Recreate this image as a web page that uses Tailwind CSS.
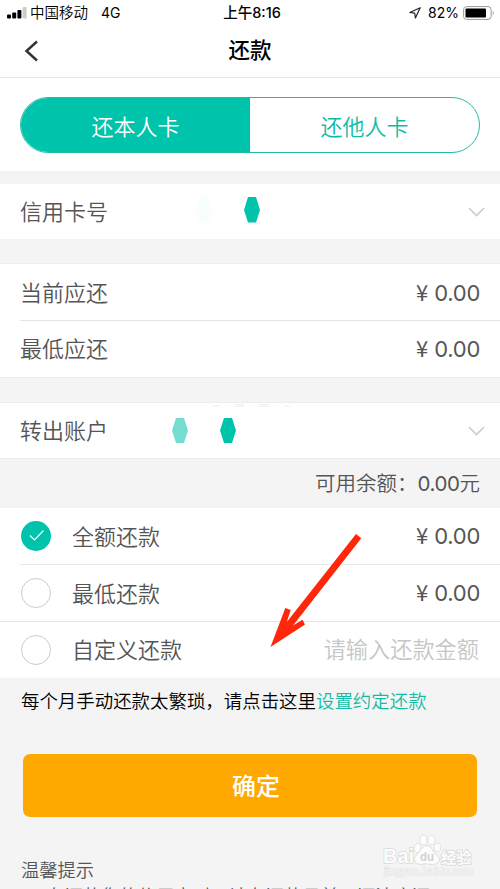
<!DOCTYPE html>
<html lang="zh-CN">
<head>
<meta charset="utf-8">
<meta name="viewport" content="width=device-width, initial-scale=1">
<title>还款</title>
<script src="https://cdn.jsdelivr.net/npm/@tailwindcss/browser@4"></script>
</head>
<body class="relative h-[889px] w-[500px] overflow-hidden bg-[#f4f4f4] font-['Inter','Noto_Sans_CJK_SC',sans-serif] text-[22px] leading-none text-[#555]">
<header class="h-[78px] border-b border-[#e8e8e8] bg-white text-black">
  <div class="grid h-[26px] grid-cols-[1fr_auto_1fr] items-center pl-[7px] pr-[5px] text-[14.5px]">
    <div class="flex items-center">
      <svg class="h-[12px] w-[20px]" viewBox="0 0 20 12"><rect x="0" y="7.5" width="4" height="4" rx="1"/><rect x="5.2" y="5.5" width="4" height="6" rx="1"/><rect x="10.4" y="3" width="4" height="8.500" rx="1"/><rect x="15.600" y="0" width="4" height="11.500" rx="1" fill="#ccc"/></svg>
      <span class="ml-[3px] font-[350]">中国移动</span><span class="ml-[13px] text-[14px]">4G</span>
    </div>
    <div class="pl-[2px] font-medium">上午8:16</div>
    <div class="flex items-center justify-end">
      <svg class="mr-[7px] h-[12px] w-[12px]" viewBox="0 0 12 12" fill="none" stroke="#222" stroke-width="1.200" stroke-linejoin="round"><path d="M11.200.8.800 5.500 5.700 6.200 6.400 11Z"/></svg>
      <span class="text-[14px]">82%</span>
      <svg class="ml-[4px] h-[14px] w-[32px]" viewBox="0 0 32 14"><rect x=".6" y=".6" width="27.500" height="12.800" rx="3" fill="white" stroke="#999"/><rect x="2.500" y="2.500" width="20.500" height="9" rx="1"/><path d="M29.700 4.700q2 2.300 0 4.600z" fill="#999"/></svg>
    </div>
  </div>
  <div class="grid h-[50px] grid-cols-[1fr_auto_1fr] items-center px-6">
    <svg class="h-[22px] w-[15px]" viewBox="0 0 15 22" fill="none" stroke="#333" stroke-width="2.500"><path d="M13 1.500 2.500 11 13 20.500"/></svg>
    <h1 class="text-[21.5px] font-medium">还款</h1>
  </div>
</header>
<main class="font-[350]">
  <section class="h-[93px] bg-white px-5 pt-[19px]">
    <div class="grid h-[56px] grid-cols-2 overflow-hidden rounded-[28px] border border-[#22bda9] text-center leading-[58px]">
      <button class="bg-[#00c3ab] text-white">还本人卡</button>
      <button class="text-[#12bba5]">还他人卡</button>
    </div>
  </section>
  <section class="mt-[13px] flex h-[55px] items-center bg-white px-5">
    <span class="w-[176px]">信用卡号</span>
    <svg class="mb-[4px] h-[26px] w-[66px]" viewBox="0 0 66 26"><path d="M4 0h8l4 13-4 13H4L0 13Z" fill="#f8fdfe"/><path d="M52 0h8l4 13-4 12.500h-8L48 13Z" fill="#00c3ab"/></svg>
    <svg class="-mr-[5px] ml-auto h-[10px] w-[17px]" viewBox="0 0 17 10" fill="none" stroke="#ccc" stroke-width="1.600"><path d="m1 1 7.500 7.500L16 1"/></svg>
  </section>
  <section class="mt-[24px] border-y border-[#ececec] bg-white pl-5">
    <div class="flex h-[57px] items-center justify-between border-b border-[#e5e5e5] pr-5 pt-px"><span>当前应还</span><span class="flex gap-[6px] font-normal"><span class="-mt-[2px] font-['Noto_Sans_CJK_SC']">¥</span><span class="tracking-[-0.3px]">0.00</span></span></div>
    <div class="flex h-[56px] items-center justify-between pr-5"><span>最低应还</span><span class="flex gap-[6px] font-normal"><span class="-mt-[2px] font-['Noto_Sans_CJK_SC']">¥</span><span class="tracking-[-0.3px]">0.00</span></span></div>
  </section>
  <section class="relative mt-[24px] flex h-[57px] items-center border-y border-[#ececec] bg-white px-5">
    <span class="w-[152px]">转出账户</span>
    <svg class="h-[25px] w-[66px]" viewBox="0 0 66 25"><path d="M4 0h8l4 12.500L12 25H4L0 12.500Z" fill="#75ddd0"/><path d="M52 0h8l4 12.500L60 25h-8l-4-12.500Z" fill="#00c3ab"/></svg>
    <svg class="-mr-[5px] ml-auto h-[10px] w-[17px]" viewBox="0 0 17 10" fill="none" stroke="#ccc" stroke-width="1.600"><path d="m1 1 7.500 7.500L16 1"/></svg>
    <svg class="absolute left-[210px] top-0 h-[5px] w-[84px]" viewBox="0 0 84 5" fill="#f3f3f3"><path d="M1 4q4-3 9-2l-1 2zM25 1h9v3h-9zM49 1h10v3H49zM73 1l9 3h-7z"/></svg>
  </section>
  <div class="flex h-[49px] items-center justify-end px-5 pt-[2px] text-[20.5px]">可用余额：<span class="font-normal tracking-[-0.400px]">0.00</span>元</div>
  <section class="bg-white pl-5">
    <div class="flex h-[57px] items-center border-b border-[#e9e9e9] pr-5">
      <svg class="ml-px h-[30px] w-[30px]" viewBox="0 0 30 30" fill="none"><circle cx="15" cy="15" r="15" fill="#00c3ab"/><path d="m9 14.500 4.500 4.500L22.500 9.500" stroke="white" stroke-width="1.200"/></svg>
      <span class="ml-[21px] pt-px">全额还款</span><span class="ml-auto flex gap-[6px] font-normal"><span class="-mt-[2px] font-['Noto_Sans_CJK_SC']">¥</span><span class="tracking-[-0.3px]">0.00</span></span>
    </div>
    <div class="-ml-5 flex h-[57px] items-center border-b border-[#e5e5e5] px-5">
      <span class="ml-px h-[30px] w-[30px] rounded-full border border-[#ccc]"></span>
      <span class="ml-[21px] pt-px">最低还款</span><span class="ml-auto flex gap-[6px] font-normal"><span class="-mt-[2px] font-['Noto_Sans_CJK_SC']">¥</span><span class="tracking-[-0.3px]">0.00</span></span>
    </div>
    <div class="flex h-[56px] items-center pr-5">
      <span class="ml-px h-[30px] w-[30px] rounded-full border border-[#ccc]"></span>
      <span class="ml-[21px]">自定义还款</span><span class="ml-auto mr-px text-[22.2px] text-[#c6c6c6]">请输入还款金额</span>
    </div>
  </section>
  <p class="flex h-[46px] items-center whitespace-nowrap pl-[21px] text-[18.450px] text-black">每个月手动还款太繁琐，请点击这里<a class="text-[#12bba5]">设置约定还款</a></p>
  <button class="ml-[23px] mt-[30px] block h-[63px] w-[454px] rounded-[7px] bg-[#ffa800] pl-[12px] pt-[2px] text-[24px] font-medium text-white">确定</button>
  <footer class="mt-[40px] whitespace-nowrap pl-[21px] text-[18.300px] leading-[27px]">
    <p>温馨提示</p>
    <p class="-mt-px">1、在还款您的信用卡时，请在还款日前，还清应还</p>
  </footer>
</main>
<svg class="absolute left-[270px] top-[530px] h-[120px] w-[100px]" viewBox="270 530 100 120"><path fill="#ff260a" d="M356 534 361.300 538.300 293 625.500 302.500 619.800 305 624.500 270.500 647 285.300 608 290.700 610 286.800 622Z"/></svg>
<svg class="absolute left-[378px] top-[830px] h-[50px] w-[100px]" viewBox="378 830 100 50" fill="#fcfcfc" stroke="#d9d9d9" stroke-width="1.500" paint-order="stroke">
  <text x="383" y="863" font-family="Liberation Sans, sans-serif" font-weight="700" font-size="20" textLength="31" lengthAdjust="spacingAndGlyphs">Bai</text>
  <ellipse cx="417.500" cy="848" rx="3" ry="4"/><ellipse cx="423.500" cy="840" rx="3.200" ry="4.500"/><ellipse cx="431.500" cy="840" rx="3.200" ry="4.500"/><ellipse cx="437.500" cy="847.500" rx="3" ry="4"/>
  <path d="M427 846c5 0 5 6 9 9 6 4 2 9-3 9-4 0-8-1-12 0-6 0-8-5-4-9s5-9 10-9Z"/>
  <text x="420" y="861" font-family="Liberation Sans, sans-serif" font-size="12.500" font-weight="700" fill="#d2d2d2" stroke="none" textLength="14" lengthAdjust="spacingAndGlyphs">du</text>
  <text x="441" y="862.500" font-family="Noto Sans CJK SC, sans-serif" font-size="15.300" font-weight="700">经验</text>
  <text x="384" y="875" font-family="Liberation Sans, sans-serif" font-size="10.500" fill="#fafafa" stroke="#dedede" stroke-width="1" textLength="89">jingyan.baidu.com</text>
</svg>
</body>
</html>
